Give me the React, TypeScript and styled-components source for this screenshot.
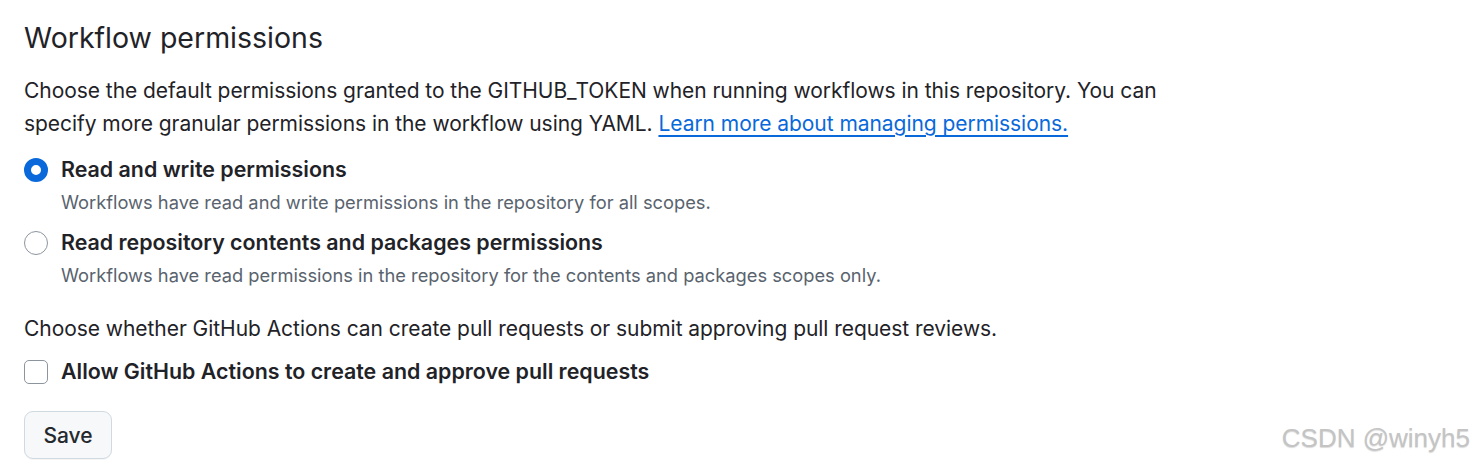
import * as React from 'react'
import styled, { createGlobalStyle } from 'styled-components'

const GlobalStyle = createGlobalStyle`
  html, body {
    margin: 0;
    padding: 0;
    background: #ffffff;
  }
  body {
    font-family: Inter, "Noto Sans", "Liberation Sans", sans-serif;
    color: #1f2328;
  }
`

const Page = styled.div`
  position: relative;
  width: 1478px;
  height: 466px;
  overflow: hidden;
  padding: 20px 24px 0 24px;
  box-sizing: border-box;
`

const Heading = styled.h2`
  margin: 0;
  font-size: 28.5px;
  line-height: 36px;
  font-weight: 400;
  color: #1f2328;
`

const Paragraph = styled.p<{ $top: number }>`
  margin: ${({ $top }) => $top}px 0 0 0;
  font-size: 21px;
  line-height: 33px;
  color: #1f2328;
  letter-spacing: -0.05px;
`

const Link = styled.a`
  color: #0969da;
  text-decoration: underline;
  text-underline-offset: 4px;
  text-decoration-thickness: 1.5px;
`

const OptionRow = styled.label<{ $top: number }>`
  display: flex;
  align-items: center;
  gap: 13px;
  margin-top: ${({ $top }) => $top}px;
  height: 33px;
  cursor: pointer;
`

const Radio = styled.span<{ $checked?: boolean }>`
  width: 24px;
  height: 24px;
  flex: none;
  border-radius: 50%;
  box-sizing: border-box;
  background: #ffffff;
  border: ${({ $checked }) =>
    $checked ? '7px solid #0969da' : '1.5px solid #8c959f'};
`

const Checkbox = styled.span`
  width: 24px;
  height: 24px;
  flex: none;
  border-radius: 5px;
  box-sizing: border-box;
  background: #ffffff;
  border: 1.5px solid #8c959f;
`

const OptionLabel = styled.span`
  font-size: 21.4px;
  line-height: 33px;
  font-weight: 600;
  color: #1f2328;
`

const Note = styled.div`
  margin: 3px 0 0 37px;
  font-size: 18.3px;
  line-height: 27px;
  color: #59636e;
`

const Button = styled.button`
  margin-top: 23px;
  width: 88px;
  height: 48px;
  border: 1.5px solid #d1d9e0;
  border-radius: 9px;
  background: #f6f8fa;
  font-family: inherit;
  font-size: 21px;
  font-weight: 500;
  color: #25292e;
  box-shadow: 0 1px 0 rgba(31, 35, 40, 0.04);
  cursor: pointer;
`

const Watermark = styled.div`
  position: absolute;
  right: 8px;
  bottom: 12px;
  font-family: "Liberation Sans", Arial, sans-serif;
  font-size: 26px;
  color: #c4c4c4;
  text-shadow: 0 1px 1px rgba(0, 0, 0, 0.15);
`

export default function App() {
  return (
    <>
      <GlobalStyle />
      <Page>
        <Heading>Workflow permissions</Heading>
        <Paragraph $top={18}>
          Choose the default permissions granted to the GITHUB_TOKEN when running
          workflows in this repository. You can
          <br />
          specify more granular permissions in the workflow using YAML.{' '}
          <Link href="#">Learn more about managing permissions.</Link>
        </Paragraph>

        <OptionRow $top={13}>
          <Radio $checked />
          <OptionLabel>Read and write permissions</OptionLabel>
        </OptionRow>
        <Note>Workflows have read and write permissions in the repository for all scopes.</Note>

        <OptionRow $top={10}>
          <Radio />
          <OptionLabel>Read repository contents and packages permissions</OptionLabel>
        </OptionRow>
        <Note>
          Workflows have read permissions in the repository for the contents and
          packages scopes only.
        </Note>

        <Paragraph $top={23}>
          Choose whether GitHub Actions can create pull requests or submit approving
          pull request reviews.
        </Paragraph>

        <OptionRow $top={10}>
          <Checkbox />
          <OptionLabel>Allow GitHub Actions to create and approve pull requests</OptionLabel>
        </OptionRow>

        <Button>Save</Button>
        <Watermark>CSDN @winyh5</Watermark>
      </Page>
    </>
  )
}
